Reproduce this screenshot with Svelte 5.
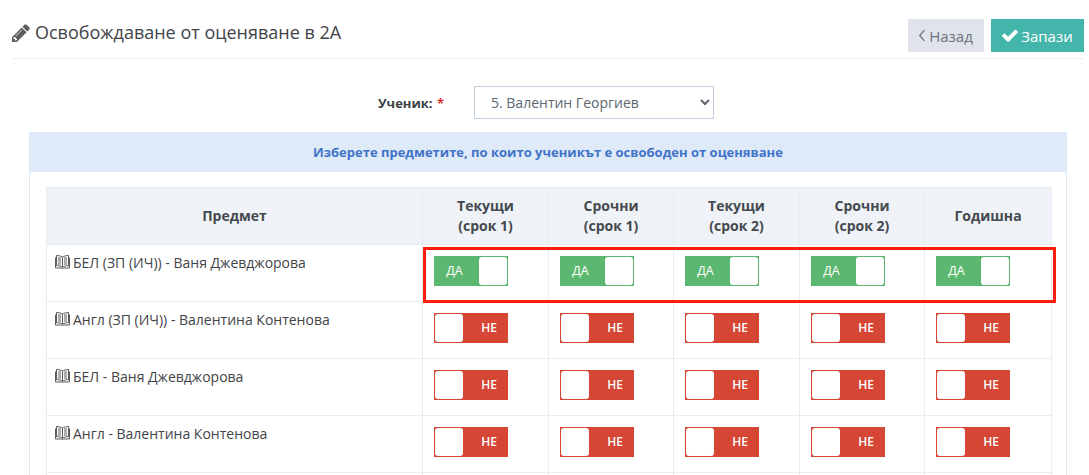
<script>
  const heads = [['Текущи', '(срок 1)'], ['Срочни', '(срок 1)'], ['Текущи', '(срок 2)'], ['Срочни', '(срок 2)'], ['Годишна']];
  const rows = [
    { name: 'БЕЛ (ЗП (ИЧ)) - Ваня Джевджорова', on: true },
    { name: 'Англ (ЗП (ИЧ)) - Валентина Контенова', on: false },
    { name: 'БЕЛ - Ваня Джевджорова', on: false },
    { name: 'Англ - Валентина Контенова', on: false },
    { name: '', on: null }
  ];
</script>

<div class="page">
  <header class="top">
    <h1>
      <svg class="pencil" viewBox="128 128 1536 1536" width="18" height="18"><path d="M491 1536l91-91-235-235-91 91v107h128v128h107zm523-928q0-22-22-22-10 0-17 7l-542 542q-7 7-7 17 0 22 22 22 10 0 17-7l542-542q7-7 7-17zm-54-192l416 416-832 832h-416v-416zm683 96q0 53-37 90l-166 166-416-416 166-165q36-38 90-38 53 0 91 38l235 234q37 39 37 91z" fill="#5d5d5d"/></svg>
      Освобождаване от оценяване в 2А
    </h1>
    <div class="actions">
      <button class="back"><svg viewBox="0 0 8 14" width="8" height="13"><path d="M6.600 1.200 1.500 7l5.100 5.800" fill="none" stroke="#6b7280" stroke-width="1.400"/></svg>Назад</button>
      <button class="save"><svg viewBox="120 260 1560 1270" width="16" height="13"><path d="M1671 566q0 40-28 68l-724 724-136 136q-28 28-68 28t-68-28l-136-136-362-362q-28-28-28-68t28-68l136-136q28-28 68-28t68 28l294 295 656-657q28-28 68-28t68 28l136 136q28 28 28 68z" fill="#fff"/></svg>Запази</button>
    </div>
  </header>

  <div class="field">
    <span class="label">Ученик: <em>*</em></span>
    <select><option>5. Валентин Георгиев</option></select>
  </div>

  <section class="panel">
    <div class="panel-head">Изберете предметите, по които ученикът е освободен от оценяване</div>
    <div class="panel-body">
      <table>
        <colgroup><col class="c0" /><col class="c1" /><col class="c2" /><col class="c1" /><col class="c2" /><col class="c3" /></colgroup>
        <thead>
          <tr>
            <th>Предмет</th>
            {#each heads as h}
              <th>{#each h as line, i}{#if i}<br />{/if}{line}{/each}</th>
            {/each}
          </tr>
        </thead>
        <tbody>
          {#each rows as r}
            <tr>
              <td class="name">
                {#if r.name}
                  <svg class="book" viewBox="0 0 15 14" width="15" height="14"><g fill="none" stroke="#5a5a5a" stroke-width="1"><path d="M7.500 2C6 1 3.500.5 1.500.5v10.200c2.200 0 4.500.4 6 1.500 1.500-1.100 3.800-1.500 6-1.500V.5c-2 0-4.500.5-6 1.500zM7.500 2v10.200"/><path d="M.5 2.500v10.500h5.800l1.200.5 1.200-.5h5.800V2.500"/><path d="M3 3h3M3 5h3M3 7h3M3 9h3M9 3h3M9 5h3M9 7h3M9 9h3"/></g></svg><span>{r.name}</span>
                {/if}
              </td>
              {#each heads as _}
                <td class="cell">
                  {#if r.on === true}
                    <div class="toggle on"><span class="txt">ДА</span><span class="knob"></span></div>
                  {:else if r.on === false}
                    <div class="toggle off"><span class="knob"></span><span class="txt">НЕ</span></div>
                  {/if}
                </td>
              {/each}
            </tr>
          {/each}
        </tbody>
      </table>
    </div>
  </section>

  <div class="highlight"></div>
</div>

<style>
  :global(body) { margin: 0; background: #fff; }
  .page {
    position: relative;
    width: 1089px;
    height: 475px;
    overflow: hidden;
    box-sizing: border-box;
    padding: 0 5px 0 12px;
    font-family: "Open Sans", sans-serif;
    color: #3b4046;
  }
  .top {
    display: flex;
    justify-content: space-between;
    height: 59px;
    box-sizing: border-box;
    padding-top: 19px;
    border-bottom: 1px solid #eeeeee;
  }
  h1 {
    margin: 0;
    display: flex;
    align-items: center;
    gap: 5px;
    height: 26px;
    font-size: 18px;
    font-weight: 400;
    color: #3f4347;
  }
  .pencil { flex: none; margin-top: 2px; }
  .actions { display: flex; gap: 7px; height: 33px; }
  button {
    border: 0;
    height: 33px;
    padding: 0;
    display: flex;
    align-items: center;
    justify-content: center;
    font-family: inherit;
    font-size: 15px;
    gap: 3px;
  }
  .back { width: 76px; background: #e0e4ea; color: #6b7280; padding-right: 1px; }
  .save { width: 93px; background: #44b5ab; color: #fff; }
  .field {
    display: flex;
    align-items: center;
    height: 33px;
    margin-top: 27px;
    padding-left: 366px;
  }
  .label { width: 96px; font-size: 13px; font-weight: 700; color: #3a3f44; }
  .label em { color: #e03131; font-style: normal; margin-left: 1px; }
  select {
    width: 240px;
    height: 33px;
    border: 1px solid #c2cfdc;
    background: #fff;
    font-family: inherit;
    font-size: 14px;
    color: #5c6670;
    padding-left: 12px;
    border-radius: 0;
  }
  .panel {
    width: 1038px;
    margin: 13px 0 0 17px;
    box-sizing: border-box;
    border: 1px solid #dfe9f5;
    border-top: 0;
  }
  .panel-head {
    height: 40px;
    background: #dfeaf8;
    display: flex;
    align-items: center;
    justify-content: center;
    font-size: 13px;
    font-weight: 700;
    color: #3f74c9;
  }
  .panel-body { padding: 15px 15px 0 16px; }
  table {
    border-collapse: collapse;
    table-layout: fixed;
    width: 1005px;
  }
  .c0 { width: 376px; }
  .c1 { width: 126px; }
  .c2 { width: 125px; }
  .c3 { width: 127px; }
  th, td { border: 1px solid #e9edf1; padding: 0; box-sizing: border-box; }
  th {
    background: #eff3f7;
    height: 57px;
    font-size: 14px;
    font-weight: 700;
    line-height: 20px;
    color: #44494f;
    text-align: center;
  }
  td { height: 57px; vertical-align: top; }
  .name {
    padding: 8px 0 0 8px;
    font-size: 14px;
    line-height: 20px;
    color: #3f4347;
  }
  .book { vertical-align: -1px; margin-right: 3px; }
  .cell { padding: 11px 0 0 11px; }
  .toggle {
    width: 74px;
    height: 30px;
    display: flex;
    box-sizing: border-box;
    font-size: 12px;
    color: #fff;
    line-height: 28px;
    border: 1px solid;
  }
  .toggle.on { background: #5cb870; border-color: #5cb870; font-size: 12.5px; }
  .toggle.off { background: #d64635; border-color: #d64635; }
  .txt { flex: 1; text-align: center; }
  .on .txt { padding-right: 5px; }
  .off .txt { padding-left: 8px; font-weight: 600; }
  .knob { width: 28px; height: 28px; background: #fff; border-radius: 3px; flex: none; }
  .highlight {
    position: absolute;
    left: 423px;
    top: 247px;
    width: 633px;
    height: 56px;
    box-sizing: border-box;
    border: 3px solid #ff1c0c;
  }
</style>
